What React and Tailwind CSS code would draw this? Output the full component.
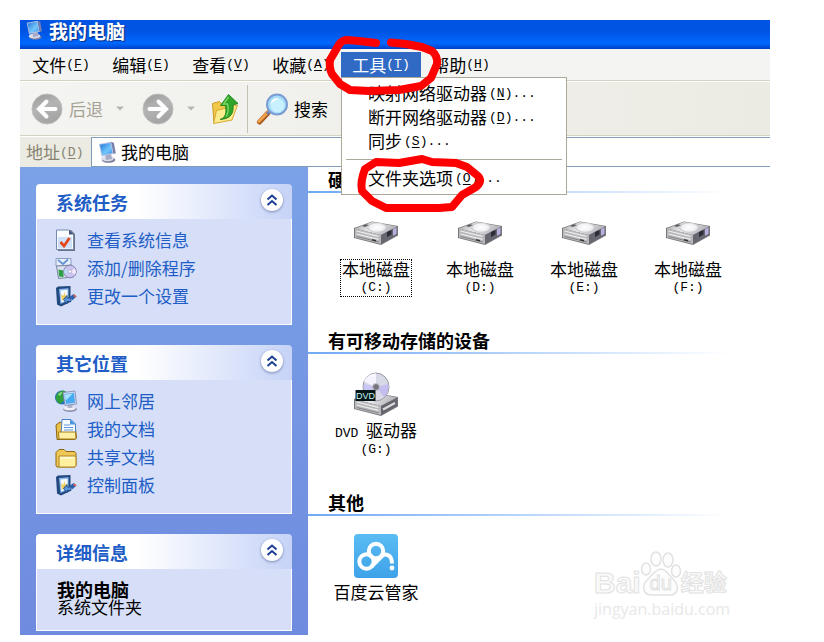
import React from "react";

const MONO = "font-['Liberation_Mono','Noto_Sans_CJK_SC',monospace] text-[13px] leading-none";

function ComputerIcon({ className }) {
  return (
    <svg viewBox="0 0 18 22" className={className} aria-hidden="true">
      <defs>
        <linearGradient id="screen" x1="0" y1="0" x2="1" y2="1">
          <stop offset="0" stopColor="#1f74d8" />
          <stop offset="0.6" stopColor="#74c6fb" />
          <stop offset="1" stopColor="#3b8fe6" />
        </linearGradient>
      </defs>
      <ellipse cx="10.500" cy="18.800" rx="6.800" ry="3" fill="#7d809f" />
      <ellipse cx="9.500" cy="17.600" rx="6.300" ry="2.700" fill="#dcdeec" />
      <path d="M7 13l6-1 1 6-6 1z" fill="#a7abc6" />
      <path d="M1 3L13 0.800l2.500 12L3.500 15.500z" fill="#b9c3e2" />
      <path d="M2 3.800L12.400 2l2 10-10.200 2.300z" fill="url(#screen)" />
      <path d="M13 0.800l2.800 1 2 10.500-2.300.7z" fill="#767fae" />
    </svg>
  );
}

function ArrowCircle({ right }) {
  return (
    <svg viewBox="0 0 32 32" className="size-8 shrink-0" aria-hidden="true">
      <defs>
        <linearGradient id="grayBall" x1="0" y1="0" x2="0.4" y2="1">
          <stop offset="0" stopColor="#989898" />
          <stop offset="0.5" stopColor="#b4b4b4" />
          <stop offset="1" stopColor="#a5a5a5" />
        </linearGradient>
      </defs>
      <circle cx="16" cy="16" r="15" fill="url(#grayBall)" stroke="#bdbdbb" />
      <g transform={right ? "matrix(-1 0 0 1 32 0)" : undefined}>
        <path d="M24.500 16H9M15.500 8.500L8 16l7.500 7.500" fill="none" stroke="#fff" strokeWidth="4" strokeLinecap="round" strokeLinejoin="miter" />
      </g>
    </svg>
  );
}

function Caret() {
  return (
    <svg viewBox="0 0 8 5" className="h-[5px] w-2" aria-hidden="true">
      <path d="M0 0.500h8L4 4.500z" fill="#b7b6ad" />
    </svg>
  );
}

function FolderUpIcon() {
  return (
    <svg viewBox="0 0 28 32" className="h-8 w-7" aria-hidden="true">
      <path d="M1.500 10.500l7-2 2 2.500 8-2.500v16L3 30z" fill="#f1c94a" stroke="#c99a26" />
      <path d="M2.500 30.500l3-13L26.500 12 21 27z" fill="#fdeb8d" stroke="#d6a92f" />
      <path d="M9 26.500c6-2 6.500-7 5.500-14H9.500L17.500 1.500 27 10.500l-5 1.500c1 8-2 14-13 14.500z" fill="#2fa528" stroke="#147b14" strokeWidth="0.800" />
      <path d="M17.500 4l-5 7h4c1.200 5 1 9-1.500 12.500" fill="none" stroke="#7bd667" strokeWidth="1.400" />
    </svg>
  );
}

function SearchIcon() {
  return (
    <svg viewBox="0 0 34 34" className="size-[34px]" aria-hidden="true">
      <path d="M3.500 30L12 21" stroke="#a85a1e" strokeWidth="5" strokeLinecap="round" />
      <path d="M3 29.300L12 20" stroke="#f1a04b" strokeWidth="3" strokeLinecap="round" />
      <path d="M11 22l4-4" stroke="#6d7fae" strokeWidth="3" />
      <circle cx="21" cy="12.500" r="10" fill="#a4dcf9" stroke="#7c9dd4" strokeWidth="2" />
      <circle cx="21.500" cy="13.500" r="7" fill="#c8f0ff" />
      <path d="M14.500 12c1-5 4-6.500 9-5.500-3 1-6 2.500-9 5.500z" fill="#fff" />
    </svg>
  );
}

function InfoIcon() {
  return (
    <svg viewBox="0 0 22 22" className="size-[22px]" aria-hidden="true">
      <path d="M3 1h13l4 4v17H3z" fill="#6f7584" />
      <path d="M1.500 1H14l4.500 4.500V20.500h-17z" fill="#fafcff" stroke="#7489b0" />
      <path d="M14 1v4.500h4.500z" fill="#41567d" />
      <path d="M3 8h14v11.500H3z" fill="#cfe0fa" />
      <path d="M5.500 13l3.500 4 5.500-8" fill="none" stroke="#e2481c" strokeWidth="2.800" />
    </svg>
  );
}

function ProgramsIcon() {
  return (
    <svg viewBox="0 0 22 22" className="size-[22px]" aria-hidden="true">
      <path d="M1 1.500h15V9H1z" fill="#e6effb" stroke="#8b9dc0" />
      <path d="M3 3l5 4 5-4.500" fill="none" stroke="#6794d0" strokeWidth="1.800" />
      <path d="M1.500 9l15-1 2 12-15 1.500z" fill="#d9dfec" stroke="#7786a2" />
      <path d="M3.500 12.500l5 1V20l-4.500-.5z" fill="#2e9f44" />
      <circle cx="15" cy="14.500" r="6.300" fill="#cbc4ee" stroke="#8684b3" />
      <path d="M15 14.500l5-3a6 6 0 0 1 0 6z" fill="#f6e9fb" />
      <path d="M15 14.500l-5 3a6 6 0 0 1 0-6z" fill="#b9dcf6" />
      <circle cx="15" cy="14.500" r="1.700" fill="#fff" stroke="#9a98c0" strokeWidth="0.700" />
    </svg>
  );
}

function SettingsIcon() {
  return (
    <svg viewBox="0 0 22 22" className="size-[22px]" aria-hidden="true">
      <path d="M1 3l2-1.500L15.500 1v16L6 21.500l-4-2z" fill="#23497f" />
      <path d="M4 4l9.500-.8V15.500L5.500 19z" fill="#8dbcf0" />
      <path d="M5.500 5.500l7-.7v10l-6 2.700z" fill="#f4f9ff" />
      <path d="M6 9l2.500 2L9.500 7l1 4 2-1-1 3.500-4.500 2z" fill="#f0cd55" />
      <path d="M8.500 14.500l3.500-4V13h4v3.500h-4V19z" fill="#5a95dc" stroke="#23497f" strokeWidth="0.900" />
      <path d="M14.500 12l4-3 3 2.500-4 3.700z" fill="#2c5fae" />
      <path d="M18 10.500l1.500-1 2 1.700-1.500 1.300z" fill="#e0614d" />
    </svg>
  );
}

function NetworkIcon() {
  return (
    <svg viewBox="0 0 22 22" className="size-[22px]" aria-hidden="true">
      <circle cx="7" cy="7.500" r="7" fill="#2470c0" />
      <path d="M2 4c3-4 7-4 9-2L8 6l1 5-4 3C0 11 0 7 2 4z" fill="#2f9e3d" />
      <path d="M3 4.500c1.500-2 3-2.500 4.500-2.500L5 6z" fill="#8fdc84" />
      <ellipse cx="15" cy="19.300" rx="6.800" ry="2.600" fill="#8f92b0" />
      <ellipse cx="14.500" cy="18.200" rx="6" ry="2.100" fill="#eff0f7" />
      <path d="M12.500 13.500h5v4.500h-5z" fill="#b0b3cc" />
      <path d="M8 2.500L20 1l1.500 13L10 15.500z" fill="#d2daf0" stroke="#7885b0" strokeWidth="0.800" />
      <path d="M9.300 4L19 2.800l1 10-9 1.200z" fill="#48abf2" />
      <path d="M9.800 4.500l8-1-7 7z" fill="#a9e1ff" />
    </svg>
  );
}

function DocumentsIcon() {
  return (
    <svg viewBox="0 0 22 22" className="size-[22px]" aria-hidden="true">
      <path d="M1 7l4-3 3 2h12l1.500 14-2 1.500H2z" fill="#eac04a" stroke="#8a6612" />
      <path d="M7 1.500h9l4.500 4.500v12H6z" fill="#f7fbff" stroke="#4d82c4" />
      <path d="M15 1v5.500h5.500z" fill="#4b94e0" />
      <path d="M9 7h6M9 9.500h9M9 12h9" stroke="#5f98d8" />
      <path d="M3.500 14h17l.5 7H4z" fill="#fff0a6" stroke="#a67d1a" />
    </svg>
  );
}

function FolderIcon() {
  return (
    <svg viewBox="0 0 22 22" className="size-[22px]" aria-hidden="true">
      <path d="M1 6.500l3-3h5l2 2h8.500l1.500 2v12l-1 1.500H2L1 19.500z" fill="#efc756" stroke="#8f6a12" />
      <path d="M4 10h15.500l1.500 1v8.500L20 21H4z" fill="#fff0a0" stroke="#b0851e" />
      <path d="M5 11.700h14" stroke="#fffbe0" strokeWidth="1.500" />
    </svg>
  );
}

function DriveShape() {
  return (
    <>
      <defs>
        <linearGradient id="driveTop" x1="0" y1="0" x2="1" y2="0.300">
          <stop offset="0" stopColor="#a9a9ac" />
          <stop offset="0.500" stopColor="#ececee" />
          <stop offset="1" stopColor="#b4b4b8" />
        </linearGradient>
      </defs>
      <path d="M0 14L18 7.500l26 4.500v9.500L27 31 0 24z" fill="#77777b" />
      <path d="M1 14.500L18 8l25 4.500L27 21z" fill="url(#driveTop)" />
      <path d="M1 14.500L27 21v9L1 23.500z" fill="#b9b9bc" />
      <path d="M27 21l16-8v8l-16 9z" fill="#66666f" />
      <path d="M2.500 17l22 5.300M2.500 20l22 5.300" stroke="#ececed" strokeWidth="1.200" />
      <path d="M2.500 22.500l22 5.300" stroke="#838387" />
    </>
  );
}

function DriveIcon() {
  return (
    <svg viewBox="0 0 44 44" className="size-11" aria-hidden="true">
      <defs>
        <radialGradient id="platter">
          <stop offset="0" stopColor="#ffffff" />
          <stop offset="0.700" stopColor="#f1f1f3" />
          <stop offset="1" stopColor="#c4c4c8" />
        </radialGradient>
      </defs>
      <g transform="translate(0 3)">
        <DriveShape />
        <ellipse cx="23" cy="13.500" rx="10" ry="5" fill="url(#platter)" />
        <path d="M8 12l4-1.800 3 .8-4 2z" fill="#5c5d63" />
        <path d="M33 18l4.500-2v4.500L33 23z" fill="#2c2d37" />
        <path d="M39 15l3.500-1.700v6.500L39 22z" fill="#b5b0dc" />
        <path d="M18 25.700l4 1" stroke="#333" strokeWidth="1.500" />
      </g>
    </svg>
  );
}

function DvdIcon() {
  return (
    <svg viewBox="0 0 44 44" className="size-11" aria-hidden="true">
      <g transform="translate(0 13)">
        <DriveShape />
        <path d="M29 24.500l12-6.500" stroke="#ddd" strokeWidth="2" />
      </g>
      <ellipse cx="22" cy="15" rx="13" ry="14" fill="#d8d9e6" stroke="#96979f" />
      <path d="M22 15L10 9.500C13 3 18 1.500 22 1.500z" fill="#f6f5fd" />
      <path d="M22 15L34.500 12c.5 6-1 10-4.500 13z" fill="#c4bdf0" />
      <path d="M22 15l-9 9c-3-4-4-8-3-12z" fill="#c9c6f3" />
      <circle cx="22" cy="15" r="3.500" fill="#77767f" stroke="#c6c6ce" />
      <path d="M1.500 18h20v11h-20z" fill="#051517" />
      <text x="11.500" y="27" textAnchor="middle" fontSize="9" fill="#c5f5f2" className="font-['Liberation_Sans',sans-serif]">DVD</text>
    </svg>
  );
}

function CloudIcon() {
  return (
    <svg viewBox="0 0 44 44" className="size-11" aria-hidden="true">
      <defs>
        <linearGradient id="cloudBlue" x1="0" y1="0" x2="0" y2="1">
          <stop offset="0" stopColor="#5bbcf3" />
          <stop offset="1" stopColor="#3da2e8" />
        </linearGradient>
      </defs>
      <rect width="44" height="44" rx="4" fill="url(#cloudBlue)" />
      <g fill="none" stroke="#fff" strokeWidth="4">
        <circle cx="12.500" cy="27.500" r="7.200" />
        <circle cx="22" cy="17" r="7.200" />
        <path d="M17.500 32.500L27.500 22.500c4-4 10.500-1.500 10.500 7" />
      </g>
      <circle cx="38" cy="34" r="2.400" fill="#fff" />
    </svg>
  );
}

const MENUS = [
  ["文件", "F"],
  ["编辑", "E"],
  ["查看", "V"],
  ["收藏", "A"],
  ["工具", "T"],
  ["帮助", "H"],
];

function Accel({ letter, dots }) {
  return (
    <span className={MONO}>
      (<u className="underline-offset-2">{letter}</u>){dots ? "..." : ""}
    </span>
  );
}

function MenuEntry({ text, letter }) {
  return (
    <button role="menuitem" className="flex h-6 items-center gap-[2px] pl-[26px] text-left text-[17px] leading-6 whitespace-nowrap">
      {text}
      <Accel letter={letter} dots />
    </button>
  );
}

function RedMarks() {
  return (
    <svg viewBox="0 0 120 180" className="pointer-events-none absolute -top-4 -left-4 z-20 h-[180px] w-[160px] overflow-visible" preserveAspectRatio="xMinYMin" aria-hidden="true">
      <g transform="translate(-326 -36)" fill="none" stroke="#fe0000" strokeWidth="8" strokeLinecap="round" strokeLinejoin="round">
        <path d="M377 43L360 41 347 40Q341 41 338 48L331 60Q330 68 333 74L341 84 351 90 370 91 400 90 422 86 432 78 438 64Q439 56 433 51L423 47 407 44 392 42.500" />
        <path d="M366 169L377 162 400 163 423 159 433 162 457 163 468 167 479 176Q484 181 477 187L463 195 453 207 440 208 387 208 373 201 363 191Q361 182 366 169z" />
      </g>
    </svg>
  );
}

function MenuBar() {
  return (
    <nav className="flex h-8 items-start border-b border-[#d5d2c2] bg-[#f4f4f2] pt-[3px] pl-px" aria-label="菜单">
      {MENUS.map(([text, letter]) => {
        const open = letter === "T";
        return (
          <div key={letter} className="relative">
            <button
              aria-expanded={open}
              className={
                open
                  ? "flex h-[25px] w-20 items-center justify-center bg-[#316ac5] text-[17px] leading-6 whitespace-nowrap text-white"
                  : "flex h-[25px] w-20 items-center justify-center text-[17px] leading-6 whitespace-nowrap"
              }
            >
              {text}
              <Accel letter={letter} />
            </button>
            {open && (
              <>
                <div role="menu" className="absolute top-full left-0 z-10 flex w-[226px] flex-col border border-[#aca899] bg-white pt-[3px] pb-1">
                  <MenuEntry text="映射网络驱动器" letter="N" />
                  <MenuEntry text="断开网络驱动器" letter="D" />
                  <MenuEntry text="同步" letter="S" />
                  <hr className="mx-1 my-[6px] border-[#aca899]" />
                  <MenuEntry text="文件夹选项" letter="O" />
                </div>
                <RedMarks />
              </>
            )}
          </div>
        );
      })}
    </nav>
  );
}

function Toolbar() {
  return (
    <div className="flex h-[55px] items-center border-t border-b border-t-white border-b-[#d5d2c2] bg-linear-to-r from-[#f4f4f2] to-[#ecebe3] pl-[11px]">
      <button disabled className="flex items-center gap-[6px] text-[17px] leading-6 text-[#a5a293]">
        <ArrowCircle />
        后退
      </button>
      <button disabled aria-label="后退列表" className="ml-[13px]"><Caret /></button>
      <button disabled aria-label="前进" className="ml-[18px]"><ArrowCircle right /></button>
      <button disabled aria-label="前进列表" className="ml-[13px]"><Caret /></button>
      <button aria-label="向上" className="ml-4"><FolderUpIcon /></button>
      <div className="ml-2 h-12 w-px bg-[#c5c2b4]" />
      <button className="ml-2 flex items-center gap-1 text-[17px] leading-6">
        <SearchIcon />
        搜索
      </button>
    </div>
  );
}

function AddressBar() {
  return (
    <div className="flex h-[31px] items-stretch border-t border-white bg-[#ecebe3]">
      <label htmlFor="address" className="flex w-[71px] items-center pl-[6px] text-[17px] leading-6 whitespace-nowrap text-[#85836f]">
        地址
        <Accel letter="D" />
      </label>
      <div className="flex flex-1 items-center gap-[5px] border border-r-0 border-[#7f9db9] bg-white pl-[6px]">
        <ComputerIcon className="h-[22px] w-[18px]" />
        <input id="address" defaultValue="我的电脑" className="min-w-0 flex-1 bg-transparent text-[17px] leading-6 outline-none" />
      </div>
    </div>
  );
}

function Panel({ title, children }) {
  return (
    <section>
      <header className="flex h-[35px] items-center justify-between rounded-t-[4px] bg-linear-to-r from-white from-40% to-[#c6d3f7] pr-[9px] pl-5">
        <h2 className="text-[18px] leading-6 font-bold text-[#215dc6]">{title}</h2>
        <button aria-label={"折叠" + title} className="mb-1 flex size-[22px] items-center justify-center rounded-full bg-white shadow-[0_1px_3px_#7d88b5]">
          <svg viewBox="0 0 12 12" className="size-3" aria-hidden="true">
            <path d="M1.500 5.500L6 1.500l4.500 4M1.500 11L6 7l4.500 4" fill="none" stroke="#1c3f94" strokeWidth="2" />
          </svg>
        </button>
      </header>
      <div className="border border-t-0 border-white bg-[#d6dff7]">{children}</div>
    </section>
  );
}

function LinkList({ items }) {
  return (
    <ul className="pt-[7px] pb-[14px] pl-[18px]">
      {items.map(([text, Icon]) => (
        <li key={text} className="flex h-7 items-center">
          <a href="#" className="flex items-center gap-[10px] text-[17px] leading-6 text-[#215dc6]">
            <Icon />
            {text}
          </a>
        </li>
      ))}
    </ul>
  );
}

const TASKS = [
  ["查看系统信息", InfoIcon],
  ["添加/删除程序", ProgramsIcon],
  ["更改一个设置", SettingsIcon],
];

const PLACES = [
  ["网上邻居", NetworkIcon],
  ["我的文档", DocumentsIcon],
  ["共享文档", FolderIcon],
  ["控制面板", SettingsIcon],
];

function Sidebar() {
  return (
    <aside className="flex w-72 shrink-0 flex-col gap-5 bg-linear-to-b from-[#7ba2e7] to-[#6f8bdf] px-4 pt-[17px] pb-1">
      <Panel title="系统任务"><LinkList items={TASKS} /></Panel>
      <Panel title="其它位置"><LinkList items={PLACES} /></Panel>
      <Panel title="详细信息">
        <div className="pt-[12px] pb-[15px] pl-5 text-[17px] leading-[17px]">
          <p className="text-[18px] font-bold">我的电脑</p>
          <p>系统文件夹</p>
        </div>
      </Panel>
    </aside>
  );
}

function Group({ title, children }) {
  return (
    <section>
      <h2 className="pl-5 text-[18px] leading-6 font-bold">{title}</h2>
      <div className="mr-10 h-[2px] bg-linear-to-r from-[#70a8f5] to-white" />
      <div className="flex gap-[8px] pt-[18px] pb-8 pl-5">{children}</div>
    </section>
  );
}

function Item({ icon, name, drive, selected }) {
  return (
    <button className="flex w-24 flex-col items-center gap-[5px]">
      {icon}
      <span
        className={
          selected
            ? "flex flex-col items-center px-px text-[17px] leading-[18px] whitespace-nowrap outline outline-dotted outline-black"
            : "flex flex-col items-center px-px text-[17px] leading-[18px] whitespace-nowrap"
        }
      >
        <span>{name}</span>
        {drive && (
          <span className="flex h-[18px] items-center">
            <span className={MONO}>({drive}:)</span>
          </span>
        )}
      </span>
    </button>
  );
}

function Watermark() {
  return (
    <div className="absolute right-[42px] bottom-[14px] w-[134px] text-[#fafafa] [-webkit-text-stroke:1px_#e2e2e2]">
      <div className="flex items-end">
        <span className="font-['Liberation_Sans',sans-serif] text-[30px] leading-7 font-bold">Bai</span>
        <span className="relative flex h-[46px] w-10 items-end justify-center">
          <svg viewBox="0 0 40 46" className="absolute inset-0 size-full overflow-visible" fill="#fdfdfd" stroke="#e2e2e2" strokeWidth="1.500" aria-hidden="true">
            <ellipse cx="5" cy="18" rx="4.500" ry="6" />
            <ellipse cx="15" cy="8" rx="5" ry="7" />
            <ellipse cx="27" cy="9" rx="5" ry="7" />
            <ellipse cx="35" cy="20" rx="4.500" ry="6" />
            <path d="M20 18c5 0 8 6 12 10 8 8 4 16-3 16H11C3 44-1 36 7 28c5-5 8-10 13-10z" />
          </svg>
          <span className="relative font-['Liberation_Sans',sans-serif] text-[20px] leading-7">du</span>
        </span>
        <span className="text-[23px] leading-8 font-bold">经验</span>
      </div>
      <div className="font-['Open_Sans',sans-serif] text-[16px] leading-6 whitespace-nowrap text-[#e8e8e8] [-webkit-text-stroke:0]">jingyan.baidu.com</div>
    </div>
  );
}

export default function App() {
  return (
    <div className="bg-white py-5 pr-[54px] pb-2 pl-5 font-['Noto_Sans_CJK_SC','Liberation_Sans',sans-serif] text-black">
      <header className="flex h-[29px] items-start gap-[6px] bg-linear-to-b from-[#0054e3] from-40% via-[#0068ff] via-80% to-[#0040c8] pl-[5px]">
        <ComputerIcon className="h-5 w-[18px]" />
        <h1 className="text-[19px] leading-[22px] font-bold text-white [text-shadow:1px_1px_1px_#0a2f86]">我的电脑</h1>
      </header>
      <MenuBar />
      <Toolbar />
      <AddressBar />
      <div className="flex">
        <Sidebar />
        <main className="relative flex-1">
          <Group title="硬盘">
            <Item icon={<DriveIcon />} name="本地磁盘" drive="C" selected />
            <Item icon={<DriveIcon />} name="本地磁盘" drive="D" />
            <Item icon={<DriveIcon />} name="本地磁盘" drive="E" />
            <Item icon={<DriveIcon />} name="本地磁盘" drive="F" />
          </Group>
          <Group title="有可移动存储的设备">
            <Item icon={<DvdIcon />} name={<><span className={MONO}>DVD </span>驱动器</>} drive="G" />
          </Group>
          <Group title="其他">
            <Item icon={<CloudIcon />} name="百度云管家" />
          </Group>
          <Watermark />
        </main>
      </div>
    </div>
  );
}
